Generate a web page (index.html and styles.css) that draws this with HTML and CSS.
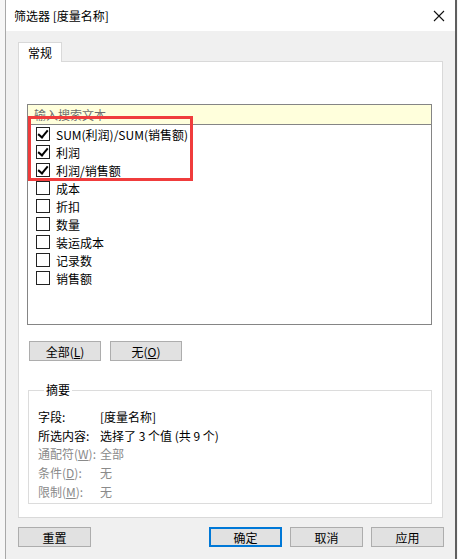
FILE: index.html
```html
<!DOCTYPE html>
<html lang="zh-CN">
<head>
    <meta charset="UTF-8">
    <title>筛选器 [度量名称]</title>
    <link rel="stylesheet" href="styles.css">
</head>
<body>
    <div class="window">
        <div class="titlebar">
            <span class="title">筛选器 [度量名称]</span>
            <button class="close" aria-label="关闭">
                <svg width="12" height="12" viewBox="0 0 12 12">
                    <path d="M1 1 L11 11 M11 1 L1 11" stroke="#111" stroke-width="1.1" fill="none"/>
                </svg>
            </button>
        </div>

        <div class="dialog-body">
            <div class="tabs">
                <div class="tab active">常规</div>
            </div>
            <div class="tab-panel">
                <div class="listbox">
                    <input class="search" type="text" placeholder="输入搜索文本">
                    <ul class="items">
                        <li><span class="check on"></span>SUM(利润)/SUM(销售额)</li>
                        <li><span class="check on"></span>利润</li>
                        <li><span class="check on"></span>利润/销售额</li>
                        <li><span class="check"></span>成本</li>
                        <li><span class="check"></span>折扣</li>
                        <li><span class="check"></span>数量</li>
                        <li><span class="check"></span>装运成本</li>
                        <li><span class="check"></span>记录数</li>
                        <li><span class="check"></span>销售额</li>
                    </ul>
                    <div class="highlight"></div>
                </div>

                <div class="list-actions">
                    <button class="btn">全部(<u>L</u>)</button>
                    <button class="btn">无(<u>O</u>)</button>
                </div>

                <fieldset class="summary">
                    <legend>摘要</legend>
                    <div class="row"><span class="label">字段:</span><span>[度量名称]</span></div>
                    <div class="row"><span class="label">所选内容:</span><span>选择了 3 个值 (共 9 个)</span></div>
                    <div class="row muted"><span class="label">通配符(<u>W</u>):</span><span>全部</span></div>
                    <div class="row muted"><span class="label">条件(<u>D</u>):</span><span>无</span></div>
                    <div class="row muted"><span class="label">限制(<u>M</u>):</span><span>无</span></div>
                </fieldset>
            </div>

            <div class="footer">
                <button class="btn">重置</button>
                <div class="footer-right">
                    <button class="btn primary">确定</button>
                    <button class="btn">取消</button>
                    <button class="btn">应用</button>
                </div>
            </div>
        </div>
    </div>
</body>
</html>
```

FILE: styles.css
```css
body {
    margin: 0;
    background-color: #f6f6f6;
    font-family: "Noto Sans CJK SC", "Noto Sans", sans-serif;
    font-size: 12px;
    color: #000;
}

.window {
    margin-left: 5px;
    width: 449px;
    height: 559px;
    border-left: 1px solid #a8a8a8;
    border-right: 2px solid #5f5f5f;
    background-color: #f0f0f0;
    display: flex;
    flex-direction: column;
}

.titlebar {
    height: 31px;
    background-color: #fff;
    display: flex;
    align-items: center;
    justify-content: space-between;
    padding: 0 8px 0 8px;
}

.title {
    font-size: 12px;
    margin-top: -1px;
}

.close {
    border: none;
    background: none;
    padding: 0;
    width: 12px;
    height: 12px;
    margin-right: 2px;
}

.close svg {
    display: block;
}

.dialog-body {
    padding: 11px 11px 0 12px;
}

.tabs {
    display: flex;
}

.tab {
    width: 42px;
    height: 19px;
    line-height: 19px;
    text-align: center;
    background-color: #fff;
    border: 1px solid #d9d9d9;
    border-bottom: none;
    position: relative;
    z-index: 1;
}

.tab-panel {
    width: 415px;
    height: 413px;
    background-color: #fff;
    border: 1px solid #d9d9d9;
    padding: 42px 0 0 8px;
    margin-top: -1px;
}

.listbox {
    position: relative;
    width: 403px;
    height: 219px;
    border: 1px solid #858585;
}

.search {
    display: block;
    width: 100%;
    height: 20px;
    box-sizing: border-box;
    border: none;
    border-bottom: 1px solid #858585;
    background-color: #ffffdc;
    padding: 0 6px;
    font-family: inherit;
    font-size: 12px;
    outline: none;
}

.search::placeholder {
    color: #6d6d6d;
}

.items {
    list-style: none;
    margin: 0;
    padding: 0 0 0 8px;
}

.items li {
    height: 18px;
    display: flex;
    align-items: center;
    gap: 6px;
}

.check {
    width: 12px;
    height: 12px;
    border: 1px solid #222;
    background-color: #fff;
    position: relative;
}

.check.on::after {
    content: "";
    position: absolute;
    left: 3px;
    top: 0px;
    width: 4px;
    height: 8px;
    border: solid #000;
    border-width: 0 2px 2px 0;
    transform: rotate(40deg);
}

.highlight {
    position: absolute;
    left: 0;
    top: 11px;
    width: 165px;
    height: 65px;
    box-sizing: border-box;
    border: 3px solid #f03c3c;
}

.list-actions {
    display: flex;
    gap: 9px;
    margin: 16px 0 0 2px;
}

.btn {
    width: 72px;
    height: 20px;
    padding: 0;
    border: 1px solid #adadad;
    background-color: #e1e1e1;
    font-family: inherit;
    font-size: 12px;
    color: #000;
}

.summary {
    margin: 23px 0 0 1px;
    width: 404px;
    height: 120px;
    box-sizing: border-box;
    border: 1px solid #dcdcdc;
    padding: 11px 0 0 9px;
}

.summary legend {
    padding: 0 2px;
    margin-left: 6px;
    line-height: 12px;
}

.row {
    display: flex;
    height: 18.8px;
    align-items: center;
}

.row .label {
    width: 62px;
}

.muted {
    color: #8a8a8a;
}

.footer {
    display: flex;
    justify-content: space-between;
    margin-top: 9px;
}

.footer .btn {
    width: 73px;
}

.footer-right {
    display: flex;
    gap: 8px;
}

.btn.primary {
    border: 2px solid #0078d7;
}
```
